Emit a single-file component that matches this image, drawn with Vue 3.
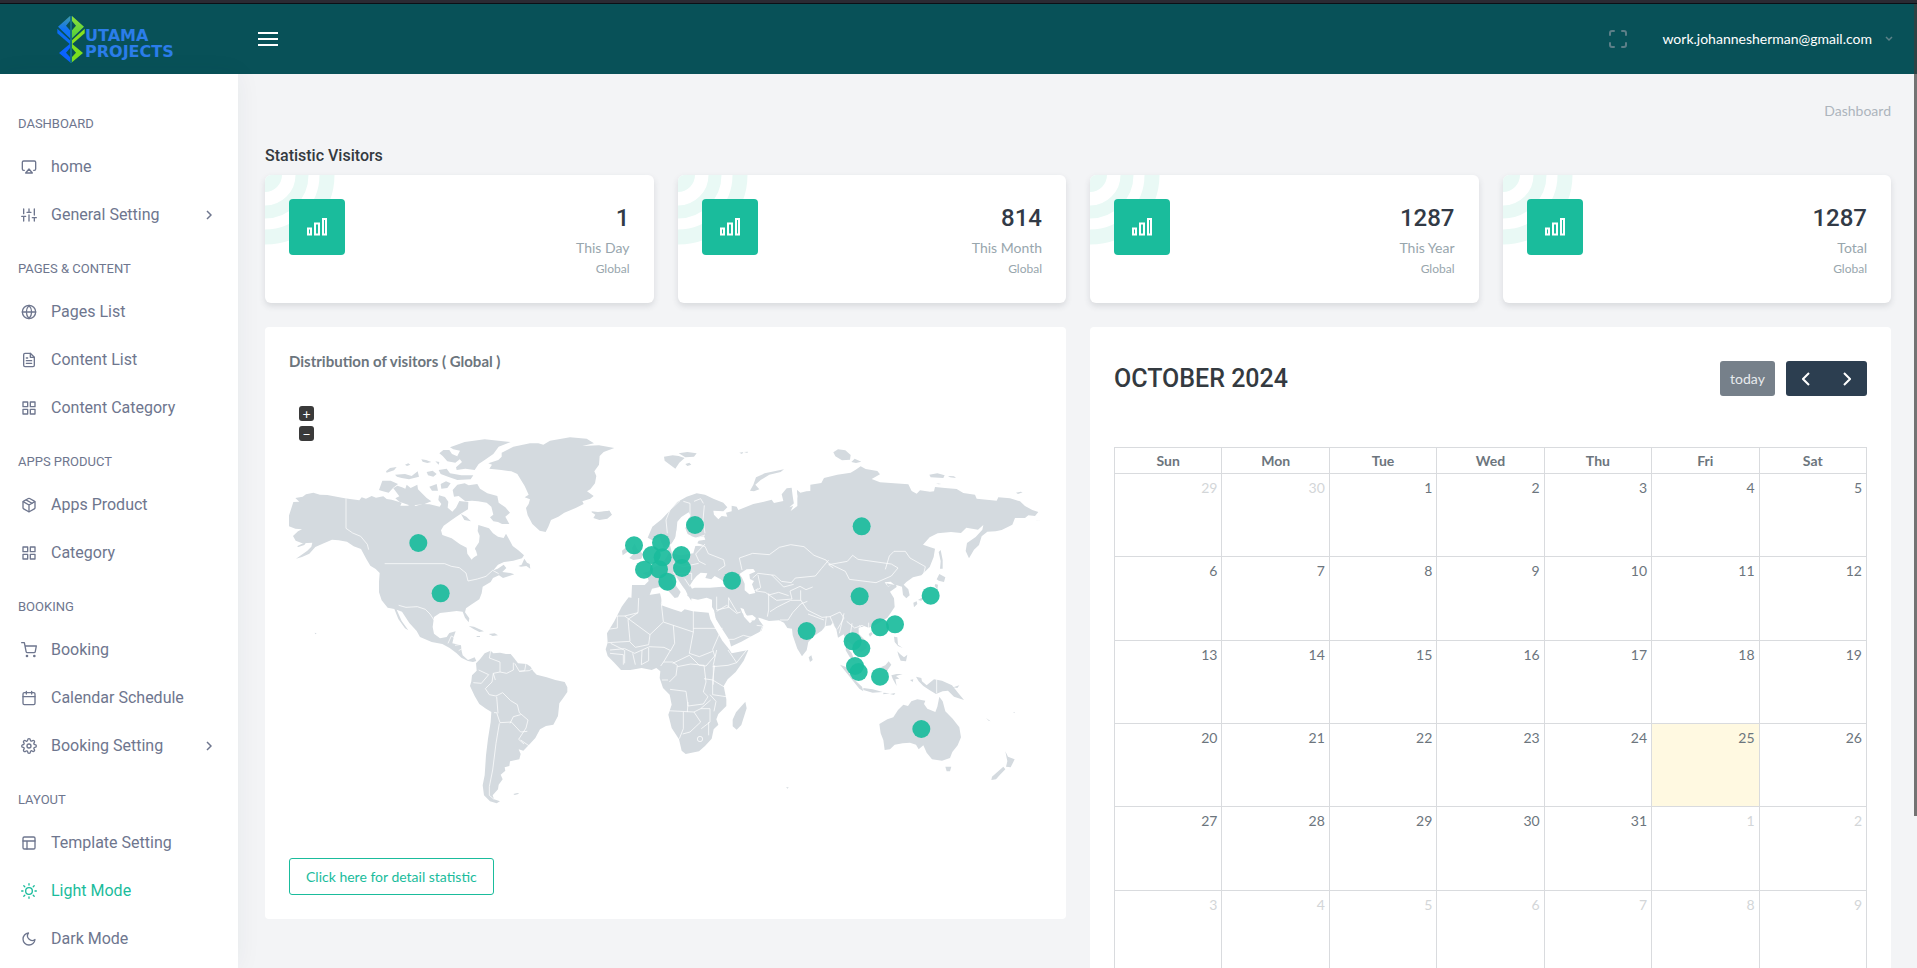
<script setup>
const icons = {
  airplay: '<path d="M5 17H4a2 2 0 0 1-2-2V5a2 2 0 0 1 2-2h16a2 2 0 0 1 2 2v10a2 2 0 0 1-2 2h-1"/><path d="M12 15l5 6H7z"/>',
  sliders: '<path d="M4 21v-7M4 10V3M12 21v-9M12 8V3M20 21v-5M20 12V3M1 14h6M9 8h6M17 16h6"/>',
  globe: '<circle cx="12" cy="12" r="10"/><path d="M2 12h20M12 2a15.3 15.3 0 0 1 4 10 15.3 15.3 0 0 1-4 10 15.3 15.3 0 0 1-4-10 15.3 15.3 0 0 1 4-10z"/>',
  file: '<path d="M14 2H6a2 2 0 0 0-2 2v16a2 2 0 0 0 2 2h12a2 2 0 0 0 2-2V8z"/><path d="M14 2v6h6M16 13H8M16 17H8M10 9H8"/>',
  grid: '<path d="M3 3h7v7H3zM14 3h7v7h-7zM14 14h7v7h-7zM3 14h7v7H3z"/>',
  box: '<path d="M16.5 9.4l-9-5.19M21 16V8a2 2 0 0 0-1-1.73l-7-4a2 2 0 0 0-2 0l-7 4A2 2 0 0 0 3 8v8a2 2 0 0 0 1 1.73l7 4a2 2 0 0 0 2 0l7-4A2 2 0 0 0 21 16z"/><path d="M3.27 6.96L12 12.01l8.73-5.05M12 22.08V12"/>',
  cart: '<circle cx="9" cy="21" r="1"/><circle cx="20" cy="21" r="1"/><path d="M1 1h4l2.68 13.39a2 2 0 0 0 2 1.61h9.72a2 2 0 0 0 2-1.61L23 6H6"/>',
  calendar: '<rect x="3" y="4" width="18" height="18" rx="2"/><path d="M16 2v4M8 2v4M3 10h18"/>',
  settings: '<circle cx="12" cy="12" r="3"/><path d="M19.4 15a1.65 1.65 0 0 0 .33 1.82l.06.06a2 2 0 0 1 0 2.83 2 2 0 0 1-2.83 0l-.06-.06a1.65 1.65 0 0 0-1.82-.33 1.65 1.65 0 0 0-1 1.51V21a2 2 0 0 1-2 2 2 2 0 0 1-2-2v-.09A1.65 1.65 0 0 0 9 19.4a1.65 1.65 0 0 0-1.82.33l-.06.06a2 2 0 0 1-2.83 0 2 2 0 0 1 0-2.83l.06-.06a1.65 1.65 0 0 0 .33-1.82 1.65 1.65 0 0 0-1.51-1H3a2 2 0 0 1-2-2 2 2 0 0 1 2-2h.09A1.65 1.65 0 0 0 4.6 9a1.65 1.65 0 0 0-.33-1.82l-.06-.06a2 2 0 0 1 0-2.83 2 2 0 0 1 2.83 0l.06.06a1.65 1.65 0 0 0 1.82.33H9a1.65 1.65 0 0 0 1-1.51V3a2 2 0 0 1 2-2 2 2 0 0 1 2 2v.09a1.65 1.65 0 0 0 1 1.51 1.65 1.65 0 0 0 1.82-.33l.06-.06a2 2 0 0 1 2.83 0 2 2 0 0 1 0 2.83l-.06.06a1.65 1.65 0 0 0-.33 1.82V9a1.65 1.65 0 0 0 1.51 1H21a2 2 0 0 1 2 2 2 2 0 0 1-2 2h-.09a1.65 1.65 0 0 0-1.51 1z"/>',
  layout: '<rect x="3" y="3" width="18" height="18" rx="2"/><path d="M3 9h18M9 21V9"/>',
  sun: '<circle cx="12" cy="12" r="5"/><path d="M12 1v2M12 21v2M4.22 4.22l1.42 1.42M18.36 18.36l1.42 1.42M1 12h2M21 12h2M4.22 19.78l1.42-1.42M18.36 5.64l1.42-1.42"/>',
  moon: '<path d="M21 12.79A9 9 0 1 1 11.21 3 7 7 0 0 0 21 12.79z"/>',
}

const groups = [
  { title: 'DASHBOARD', items: [
    { label: 'home', icon: 'airplay' },
    { label: 'General Setting', icon: 'sliders', more: true },
  ] },
  { title: 'PAGES & CONTENT', items: [
    { label: 'Pages List', icon: 'globe' },
    { label: 'Content List', icon: 'file' },
    { label: 'Content Category', icon: 'grid' },
  ] },
  { title: 'APPS PRODUCT', items: [
    { label: 'Apps Product', icon: 'box' },
    { label: 'Category', icon: 'grid' },
  ] },
  { title: 'BOOKING', items: [
    { label: 'Booking', icon: 'cart' },
    { label: 'Calendar Schedule', icon: 'calendar' },
    { label: 'Booking Setting', icon: 'settings', more: true },
  ] },
  { title: 'LAYOUT', items: [
    { label: 'Template Setting', icon: 'layout' },
    { label: 'Light Mode', icon: 'sun', active: true },
    { label: 'Dark Mode', icon: 'moon' },
  ] },
]

const stats = [
  { value: '1', label: 'This Day' },
  { value: '814', label: 'This Month' },
  { value: '1287', label: 'This Year' },
  { value: '1287', label: 'Total' },
]

const dots = [
  [1255, 1629], [1322, 1780], [1902, 1636], [1983, 1628], [1955, 1665], [1988, 1672],
  [1932, 1709], [1977, 1708], [2002, 1745], [2044, 1665], [2046, 1704], [2085, 1575],
  [2196, 1742], [2420, 1893], [2585, 1579], [2579, 1789], [2792, 1787], [2640, 1882],
  [2685, 1873], [2558, 1924], [2584, 1945], [2565, 1998], [2576, 2016], [2640, 2030], [2764, 2187],
]

const weekdays = ['Sun', 'Mon', 'Tue', 'Wed', 'Thu', 'Fri', 'Sat']
const first = new Date(2024, 8, 29)
const weeks = Array.from({ length: 6 }, (_, w) =>
  Array.from({ length: 7 }, (_, d) => {
    const date = new Date(first.getFullYear(), first.getMonth(), first.getDate() + w * 7 + d)
    return { n: date.getDate(), other: date.getMonth() !== 9, today: date.getMonth() === 9 && date.getDate() === 25 }
  }),
)
</script>

<template>
  <div class="app">
    <div class="window-edge"></div>
    <header class="topbar">
      <a href="#" class="brand" aria-label="Utama Projects">
        <svg width="28" height="48" viewBox="15 22 84 144" aria-hidden="true">
          <defs>
            <linearGradient id="wing" x1="0" y1="0" x2="0" y2="1">
              <stop offset="0" stop-color="#3f9aa8" />
              <stop offset="0.6" stop-color="#1173f5" />
            </linearGradient>
            <linearGradient id="leaf" x1="0" y1="0" x2="0" y2="1">
              <stop offset="0" stop-color="#8fe03a" />
              <stop offset="1" stop-color="#4fcf3a" />
            </linearGradient>
          </defs>
          <path fill="url(#wing)" d="M54 25 18 57l36 35V68L42 54l12-14z" />
          <path fill="#0b6cf5" d="M16 63l38 35v12L16 77z" />
          <path fill="url(#leaf)" d="M60 25l36 32-36 35V68l12-14-12-14z" />
          <path fill="#86e01e" d="M98 63 60 98v12l38-33z" />
          <path fill="#0b63ff" d="M54 108 21 136l33 28v-16l-12-13 12-14z" />
          <path fill="#7be01f" d="M60 108l33 28-33 28v-16l12-13-12-14z" />
          <path stroke="#1f8fb0" stroke-width="3" d="M57 25V166" />
        </svg>
        <span class="brand-name">UTAMA<br />PROJECTS</span>
      </a>
      <button class="burger" aria-label="Toggle menu"><i></i><i></i><i></i></button>
      <div class="top-right">
        <button class="full" aria-label="Fullscreen">
          <svg width="20" height="20" viewBox="0 0 20 20" fill="none" stroke="#5d7f88" stroke-width="2" stroke-linecap="round">
            <path d="M2 6V4q0-2 2-2h2M14 2h2q2 0 2 2v2M18 14v2q0 2-2 2h-2M6 18H4q-2 0-2-2v-2" />
          </svg>
        </button>
        <button class="account">
          work.johannesherman@gmail.com
          <svg width="8" height="6" viewBox="0 0 8 6" fill="none" stroke="#5d8289" stroke-width="1.500"><path d="M1 1l3 3 3-3" /></svg>
        </button>
      </div>
    </header>

    <div class="body">
      <nav class="side">
        <section v-for="g in groups" :key="g.title">
          <h2>{{ g.title }}</h2>
          <a v-for="it in g.items" :key="it.label" href="#" class="item" :class="{ active: it.active }">
            <svg width="16" height="16" viewBox="0 0 24 24" fill="none" stroke="currentColor" stroke-width="2" stroke-linecap="round" stroke-linejoin="round" v-html="icons[it.icon]"></svg>
            <span>{{ it.label }}</span>
            <svg v-if="it.more" class="more" width="6" height="10" viewBox="0 0 6 10" fill="none" stroke="currentColor" stroke-width="1.500"><path d="M1 1l4 4-4 4" /></svg>
          </a>
        </section>
      </nav>

      <main>
        <div class="crumb">Dashboard</div>
        <h3 class="section-title">Statistic Visitors</h3>

        <div class="stats">
          <article v-for="s in stats" :key="s.label" class="stat">
            <svg class="rings" width="70" height="70" viewBox="0 0 70 70" fill="none" stroke="#e9f9f5" aria-hidden="true">
              <circle r="17" fill="#e9f9f5" stroke="none" />
              <circle r="37" stroke-width="13" />
              <circle r="62" stroke-width="15" />
            </svg>
            <div class="badge">
              <svg width="22" height="20" viewBox="0 0 22 20" fill="none" stroke="#fff" stroke-width="2">
                <path d="M2 11.500h3v6H2zM9 6.500h4v11H9zM17 2h3v15.500h-3z" />
              </svg>
            </div>
            <div class="figures">
              <strong>{{ s.value }}</strong>
              <span>{{ s.label }}</span>
              <small>Global</small>
            </div>
          </article>
        </div>

        <div class="panels">
          <section class="panel">
            <h4>Distribution of visitors ( Global )</h4>
            <div class="map">
              <div class="zoom">
                <button aria-label="Zoom in">+</button>
                <button aria-label="Zoom out">−</button>
              </div>
              <svg viewBox="867 1170 2259 1332" role="img" aria-label="World map of visitors">
                <!-- Americas -->
                <g transform="translate(840 1140)">
                  <g fill="#d4dadf">
                    <path d="M40 366l18-1-12-11 22-4 10-7 22-5 20 6 22 1 48 9 20 3 28 4 7-9 13 4 17-8 13 5 22-4 10 8 15 2 30 9-4 9h22l15-6 9 7 20-6 22 1 30 7 5-8-9-12 2-14 18 5 10 14-2 18 14 12 11-12 10-20 27 3-1 22-17 10-18 12-14 10-24 17-8 14 4 14 28 10 25 18 20 10 2 18 13 18 13-16-3-18 12-18 2-20-6-14 2-18 32 10 12 15 15 10 17 4 7-13 12 22 8 15 17 13 17 15-6 9-26 7-28 4-18 8-14 17 13-5 18-12 8 10-12 12 24 3 12 4-18 6-16 5-12-8-18 8-7 12-24 14-3 20-7 18-26 17-14 10-3 12 13 18-2 12-11-14-7-18-18-2-30 4-20 2-18 12-4 30 4 20 18 14 20-4 8-12 19-5-5 14-5 22 26 6 2 18 3 12 16 14 20-8 5 11-10 3-15-3-20-10-15-14-20-15-22-12-32-6-35-15-10-18-22-24-22-34-16-6 15 34 20 28-10-6-20-28-12-30-20-4-18-22-8-24v-32l2-26-12-12-16-10-12-20-16-30-22-8-20-14-25-4-20-2-28 12-22 10-18 20-22 10-18 5 34-24 12-12 3-12-30 2-20-8-8-14 15-14 12-6-20-2-22-8-5-6z" />
                    <path d="M297 330l10-28 25 0 22 10-15 12-13 14-20-5zM318 274l12-10 20-3-8 10-22 7zM345 284l30-2 20 6 18-14 4 16-30 8-22-4-14-4zM340 325l12-8 14 5 10 4 4-12 12 10 20-10 2 14 14 14 12 12 14 10-20 8-26 3-22 0-28-10-12-10 12-6zM424 238l14 2 16 6-12 3-14-4zM375 254l10-4 6 4-10 4zM440 276l18-4 12 10-10 8-16-4zM448 320l22-8 4 20-18 0zM482 312l16-8 14 6-10 14-18 2zM478 220l12-10 18 0 8 12 28 12-18 14-24-4-14-16zM476 270l24-4 10 14 34 6 36 0-8 12-40 2-28-10-22-8zM466 244l12 2-2 8zM510 202l44-16 60-8 78 8-36 14-16 22-26 18-18 12-12 18-28-4-26 4-2-8 18-16-14-18 8-16-20-4zM518 330l14-16 22-4 12 6 26-4 8 14 22 14 30 8 4 20 20 14 14 16-14 12 12 22-22 0-12-6-14-2-10-12 10-8-6-24-14-12-26-4-18-2-20 2-20-16-14 2zM543 402l16 8 14 14-20-4zM715 558l10-4 8-18 8 12 8 4 2 14-12-8-16 2z" />
                    <path d="M625 250l30-10 10-10 0-12 35-18 50-10 25 0 15 4 20-12 60-10 50 4 22 14-35 8 50-2 46 8-32 12-12 12-2 26-14 20 6 14-4 22-14 18-10 6 20 14-10 8-24 8 4 8-24 12-34 14-18 12-22 10-8 20-8 16-18-4-22-20-14-26-5-22 8-12 4-14-16-6 12-8-12-26-22-36-18-8-30-4-36-4 8-12zM934 394l20 2 34-4 6 12-16 10-20 2-14-6 10-8-16-4zM566 738l16 2 30 14-14 2-16-8zM626 762l18-2 10 6-16 2zM590 768h10v3h-10zM104 758l6 2-4 3zM51 499l20-10 12-8-10 14-18 6z" />
                    <path d="M600 838l14-18 18-8 8 8 20-2 18 4 14 0 10 12 12 16 26 2 12 8 8 14 10 10 30 8 26 8 28 6 8 16 0 14-14 20-10 14-4 38-14 26-22 4-18 10-14 26-20 22-16 16-14-4 6 14-4 16-28 6-2 14-14 4 2 10-14 12 6 14-12 16-2 14-16 18 4 12 18 6-10 6-20-6-18-18-4-30 6-30 4-60 6-50 8-50 2-30-16-10-20-14-14-24-14-30 4-14 2-18 14-14-2-22zM700 1242l12-3 6 2-14 4z" />
                  </g>
                  <path fill="#fff" d="M560 480l12 18-4 16 2 14 8 6 14-8-4-14z" />
                  <g fill="none" stroke="#fff" stroke-width="2.200">
                    <path d="M198 355v90l20 14 24 10 20 24 4 16M314 551h180l20 8 24 4 20 16 6 24 28-6 26-8 20-18 18 10M356 676l22 6 34-2 24 8 14 14 16 24M504 790l10-22 14 8M525 796l26-4M536 812l14-8" />
                    <path d="M632 812l-4 22 32 12 0 30-20 4-4 26-20 20 12 18 20 4 20-10 24 24 20 12 6 24 26 22-6 24-22 34 16 14M580 908l24 2 22-26-30-14M640 880l6 20M660 876l20 4 20-10 0-22M704 850l14 24 16-2 4-22M718 874l30-2 16-10M690 1030l10-20 22-6M642 998l8 0 10 30 34-2 28 30 20-2M650 950l4 50M658 1030l-10 60-10 80-10 50 0 26 14 12M722 1080l26 18" />
                  </g>
                </g>
                <!-- Europe, Asia, Africa, Oceania -->
                <g transform="translate(1770 1260)">
                  <g fill="#d4dadf">
                    <path d="M187 320l28-22 24-26 23-26 28-16 30-10 25 4 25 12 30 12 12 14-12 12-30-2 2 12 13 14 10-10 17 2-4-12 17-4v-17l15 3 5 10 15-6 30-12 25-5 30-8 7 10 28-6-5-20 15-18 15-2 3 25 4 25-10 20 20-15 0-30-3-20 12 10 18-4 12-1 0-19 33-5 8-15 40-10 40-6 15-9 15-10 15 8 35 6 8 10-25 14 25 10 85 6 10 20 15 8 10-10 30 4 12-1 3-13 30 3 35 3 20 12 35 5 5 12 60 6 5-10 35 3 30 9 15 14 22 12 18 6-10 12-20-2-10 8h-30l-8 20-32 16-18 4-25 1-17 14-8 26-15 14-15 26-10-22 4-24 26-18 20-22 3-14-16 14-35-6-16 16-30-3-40 4-24 12-20 22 22 8 14 4-4 25-12 30-25 25-25 6-20 14-8 8 14 14 4 18-10 9-10-10-3-25-17-5-10 10-17-2 15-12-13 9-5-10 25 5-12-10-18 2 12 16 22-10 2 8-20 14 12 20 2 26-12 18-10 14-36 22-20 8-12-4-18 4 0 18 24 24v20l-17 12-14-8-14-16-12-8-2 18 14 16 10 26-16-14-12-20 2-26-8-22-17 10-5-25-12-20-4 8-16 2-12 14-20 14-20 20-5 25-14 18-14-23-14-40-2-20-14-2-10-16-15-7-30 2-30-10-8 2-12-10-18 2-8-20-10-4 6 16 14 14 7 10 16-2 8-14 6 14 12 16-6 16-30 16-30 16-34 16-4-12-22-34-16-34-6-30-6-10 0-22-16-6-26 6-22-4-10-8 0-16 22-8 26 0 20 0 36-3 12 2-2-12-14-12-18-10-10 10-18-4 6-14-20-2-12 10-10 12-10 16 6 10-8 12 6 10 0 14-8-12-10-20-12-16-14-20-10-6-4 10 14 22 12 16-8 16-10 2-18-20-24-14-26 6-5 14-8 20-22 7-17-6-10-2 2-44 38 0 12-12-4-16-16-8 18-4 12-10 20-10 20-18 10-17-4-16 8-8 6 24 26 6 38-6 6-22 26-2-20-6 4-8 20-3-4-10-24 4-24-8-8-20 8-22 10-10-18 6-20 20-8 18-2 18-12 16-22 14-10-22-3-12-22 10-14-8z" />
                    <path d="M222 110l26-4 18 2 18 6-16 14-12 18-14-10-18-14zM266 100l26-4 28 4-8 10-26 2zM286 132l12-4 6 6-12 4zM448 98l12-2-4 6zM462 96l12-1-2 4zM480 212l10-18 8-22 26-12 36-8 22-4-10 8-34 8-26 16-16 14 12 14-16 6zM4 276l18 2 36-6 8 12-14 12-24 4-18-6 6-10zM96 392l10-8 6 12-14 10zM118 414l12-12-4-18 8-14 8 18 18 14-6 14-24 4z" />
                    <path d="M730 97l14-9 22 3 16 14-2 14-24 2-20-12zM784 126l10-10 20 9-16 4zM1018 164l24-4 22 6-4 8-38-2zM1074 168l18 1 6 5-18-2zM1038 190l16 2-8 1zM1278 218l14-3 6 2-14 5zM1338 300l14 2-12-1zM1046 396l6-6 6 30 0 26-8 0 2-22zM1040 478l8-16 18 10-4 14-16-4zM1036 492l8 2-2 14-8-10zM970 548l10-4 2 8-10 10zM984 540l14-8 10-4-14 14zM836 642l8-6 4 6-8 8zM656 712l8-6 4 14-8 6zM912 650l10 2 2 22 14 10-14-6-10-12zM922 694l8 8 12 10 10-8-4 20-16-2-6-14zM750 734l20 8 14 28 32 30 4 14-12-8zM872 742l14-6 10-12 8 10-14 20zM820 804l28 4 30 8-30 2-28-8zM880 818l20 2-20 3zM900 822l16-3-4 6zM904 766l16-4 18 0-20 6 10 8-12 2 4 20-8-14-4-8zM960 780l10-2-2 8zM978 770l16 4 2 10 14 12 22-18 24 4 30 14 18 22 18 22-30-10-18-18-16 2-20 8-20-12-18-12-14-14zM1090 802l18-6-6 8z" />
                    <path d="M868 912l24-14 18-6 14-22 16-16 14 4 10-14 18-6 24 4-4 10 10 14 24 10 6-16 6-30 10 14 8 30 22 22 20 26 5 30-10 24-16 20-7 18-24 8-30-4-16-20-10-22-14 12-8-14-18-6-22 2-24 4-14 14-16 2-4-30-8-20zM1066 1040l18 0-4 14-10 0zM1246 994l8 16 20 8-12 24-14-2 4-16zM1206 1070l34-30 6 8-16 16-12 14-14 2zM1188 894l14 10-6-2zM1270 876l6 1-4 2zM588 1102l8 0-3 4z" />
                    <path d="M95 560l13-18 8-10 22 4 34-10 38-6 6 24-2 12 30 10 30 10 10-8 24 6 48 4 5 20 14 26 22 38 22 28 6 10 50-10-14 32-24 34-24 22-12 20 8 40 0 20-24 24-6 16 6 16-14 14-6 28-20 22-18 16-40 8-12-10-8-34-22-34-10-40 10-30-6-30-20-20-10-30 2-20-12-10-14 6-30-6-34 6-28 0-20-22-20-20-6-20 6-20-2-28 22-36zM466 845l4 20-16 50-14 14-12-10 0-20 10-22z" />
                  </g>
                  <g fill="#fff">
                    <path d="M448 462l22-14 20-1 6 8-18 8 2 14 12 6-6 10 10 26-18 4-14-12 0-20-8-18zM262 305l12-14 22-14 6 10-14 18-10 10 2 20 26 14-18 4-22 14-12 10-6-10 10-18zM456 568l16 20 14 16-6 6-18-20z" />
                    <path d="M358 574l8 4 26 42 26 40 8 30-10-8-24-36-22-44zM598 262l14-12 0-50 8-4 2 34-6 26z" />
                  </g>
                  <g fill="none" stroke="#fff" stroke-width="2.200">
                    <path d="M300 285l0-35-20-6M232 340l-4-40 12-30 30-28M340 250l-8-14-20 8M345 340l-6-40 4-44M345 345l-30 10 0 20 30 4 10 22 46 18 4 18-20 14M285 380l30-6M300 350l10 30M345 372l-28 30 10 22 20 10M250 430l30 10 46-10M255 460l50 0 0 20M300 500l-16-24M110 480l0 36M276 500l-26-44" />
                    <path d="M456 450l-8-36 40-14 50 4 30-22 34-8 40 6 30 26 36 14 8 10 50 24 12 24 80 10 46-20 20-24-20-12-100-14-16-12-16 18-56 10 14 10M886 448l12-40 14-14 34 0 14 20 46 26-6 26-24 14M716 420l-22 26-18 22-60 6-12 14-30-4-20-18-50-6-16 14M504 465l8 38-14 10 28 4 34 24 46-4-6-24 30-14 18 10 20-8M545 465l36 36 30-8M505 505l-16 10M536 520l0 50-4 20M540 575l22-14 40-20 30 0 0-30M536 525l30-8 30 10M632 540l20 30 44 22 24-2 30-14 12 18-20 34M654 582l48 18M709 590l-4 34M720 590l12 26M762 580l-14 60M770 604l24 20 22-8 20 12 0-20M786 610l-6 40M808 616l20 24 8 20M570 600l24 0 14-22 24-26 20-8" />
                    <path d="M380 530l0 40 36-8 0-30M380 574l30-18 30 24 12-4M362 572l12 10M416 534l26 44M416 658l16 0 28-12 24 6 24-10 10-24-18-2" />
                    <path d="M310 558v78l-90-30M310 625h88M220 605l-6-54 4-28M220 606l-40 38-76-56 40-10 2-44M104 588l-34 0-18 40 30-4 0-36M144 578l-30 20 6 66-66 4M180 644l-4 30-40 8-16-16M250 616l4 54-12 22-20-10-46-2M310 636l-12 64 30 10 40-16M248 730l50-24 30 30 20 2 26-30-6-20 26-60M176 682l0 40-22 12M128 700l8 34M104 690l0 40M156 690l-2 44M60 690l44-4 30 14 40-18M60 700l40 4 0 30M62 670l40 20M242 690l-20 34-10 14M220 726l28 0 14 10-4 30-20 20M234 780l-18 0M262 740l40-8 40 4 6 50-8 30 14 14-14 22-46 6-6-44-48-6M368 740l46-4 26-8 30-38M380 690l-10 44 0 60M414 690l26 38M374 736l-6 44 40 24M342 776l26 4 0 44 40 6M232 872l80 4 20-10 30-26M280 876l0 50-12 30M294 846l-2 30M312 876l20 30-32 30-22 6M332 866l28 0 0 40-26 20M360 824l18 20-6 30M356 906l0 40M1040 778v42" />
                    <circle cx="330" cy="957" r="8" />
                  </g>
                </g>
                <g fill="#1abc9c" fill-opacity="0.920">
                  <circle v-for="(d, i) in dots" :key="i" :cx="d[0]" :cy="d[1]" r="27" />
                </g>
              </svg>
            </div>
            <a href="#" class="detail">Click here for detail statistic</a>
          </section>

          <section class="panel cal">
            <div class="cal-head">
              <h2>OCTOBER 2024</h2>
              <div class="cal-tools">
                <button class="today-btn" disabled>today</button>
                <div class="pager">
                  <button aria-label="Previous month"><svg width="8" height="14" viewBox="0 0 8 14" fill="none" stroke="#fff" stroke-width="2"><path d="M7 1L1 7l6 6" /></svg></button>
                  <button aria-label="Next month"><svg width="8" height="14" viewBox="0 0 8 14" fill="none" stroke="#fff" stroke-width="2"><path d="M1 1l6 6-6 6" /></svg></button>
                </div>
              </div>
            </div>
            <table>
              <thead>
                <tr><th v-for="d in weekdays" :key="d" scope="col">{{ d }}</th></tr>
              </thead>
              <tbody>
                <tr v-for="(w, i) in weeks" :key="i">
                  <td v-for="(d, j) in w" :key="j" :class="{ other: d.other, today: d.today }">{{ d.n }}</td>
                </tr>
              </tbody>
            </table>
          </section>
        </div>
      </main>
    </div>
    <div class="scroll-thumb"></div>
  </div>
</template>

<style>
body {
  background: #f3f4f6;
  overflow: hidden;
}
</style>

<style scoped>
.app {
  --ui: Lato, "Noto Sans", sans-serif;
  --head: Roboto, "Liberation Sans", sans-serif;
  display: flex;
  flex-direction: column;
  height: 100vh;
  overflow: hidden;
  font: 14px/22px var(--ui);
  color: #6c757d;
  background: #f3f4f6;
}
.app * {
  box-sizing: border-box;
}
button {
  border: 0;
  padding: 0;
  background: none;
  font: inherit;
  color: inherit;
}
a {
  text-decoration: none;
}
h2, h3, h4 {
  margin: 0;
}
.window-edge {
  flex: none;
  height: 4px;
  background: #2b2a33;
  border-bottom: 1px solid #0c0f16;
}
.topbar {
  flex: none;
  display: flex;
  align-items: center;
  height: 70px;
  padding-right: 24px;
  background: #085158;
}
.brand {
  display: flex;
  align-items: center;
  width: 240px;
  padding-left: 57px;
  color: #2b7de9;
}
.brand-name {
  padding-top: 10px;
  font: bold 16px/16px "DejaVu Sans", sans-serif;
}
.burger {
  display: flex;
  flex-direction: column;
  gap: 4px;
  margin-left: 18px;
}
.burger i {
  width: 20px;
  height: 2px;
  background: #fff;
}
.top-right {
  display: flex;
  align-items: center;
  gap: 34px;
  margin-left: auto;
}
.full, .full svg {
  display: block;
}
.account {
  display: flex;
  align-items: center;
  gap: 13px;
  color: #fff;
}
.body {
  flex: 1;
  display: flex;
  min-height: 0;
}
.side {
  flex: none;
  width: 238px;
  padding-top: 20px;
  background: #fff;
  box-shadow: 0 0 24px rgba(40, 50, 65, 0.06);
  color: #6e768e;
  font-family: var(--head);
}
.side h2 {
  padding: 21px 18px 10px;
  font-size: 13px;
  line-height: 18px;
  font-weight: 400;
}
.item {
  display: flex;
  align-items: center;
  height: 48px;
  padding: 0 26px 0 21px;
  gap: 14px;
  font-size: 16px;
  color: inherit;
}
.item.active {
  color: #1abc9c;
}
.more {
  margin-left: auto;
}
main {
  flex: 1;
  min-width: 0;
  padding: 0 26px 0 27px;
}
.crumb {
  height: 74px;
  line-height: 74px;
  text-align: right;
  color: #adb5bd;
}
.section-title {
  height: 27px;
  font: 500 16px/16px var(--head);
  color: #343a40;
}
.stats {
  display: grid;
  grid-template-columns: repeat(4, 1fr);
  gap: 24px;
}
.stat {
  position: relative;
  display: flex;
  justify-content: space-between;
  height: 128px;
  padding: 24px;
  border-radius: 6px;
  background: #fff;
  box-shadow: 0 3px 6px rgba(50, 58, 70, 0.14);
  overflow: hidden;
}
.rings {
  position: absolute;
  left: 0;
  top: 0;
}
.badge {
  position: relative;
  display: grid;
  place-items: center;
  width: 56px;
  height: 56px;
  border-radius: 4px;
  background: #1abc9c;
}
.figures {
  display: flex;
  flex-direction: column;
  text-align: right;
  color: #98a6ad;
}
.figures strong {
  font: 500 24px/38px var(--head);
  color: #323a46;
}
.figures span {
  line-height: 22px;
}
.figures small {
  font-size: 12px;
  line-height: 20px;
}
.panels {
  display: grid;
  grid-template-columns: 1fr 1fr;
  align-items: start;
  gap: 24px;
  margin-top: 24px;
}
.panel {
  padding: 24px;
  border-radius: 4px;
  background: #fff;
}
.panel h4 {
  font: bold 15px/20px var(--ui);
}
.map {
  position: relative;
  margin: 19px 0 24px;
}
.map svg {
  display: block;
  width: 100%;
}
.zoom {
  position: absolute;
  left: 10px;
  top: 16px;
  display: grid;
  gap: 5px;
}
.zoom button {
  width: 15px;
  height: 15px;
  border-radius: 3px;
  background: #3a3a3a;
  color: #fff;
  font: 14px/14px var(--ui);
}
.detail {
  display: inline-block;
  padding: 7px 16px;
  border: 1px solid #1abc9c;
  border-radius: 3px;
  line-height: 21px;
  vertical-align: top;
  color: #1abc9c;
}
.cal {
  padding-top: 34px;
}
.cal-head {
  display: flex;
  align-items: center;
  justify-content: space-between;
  margin-bottom: 51px;
}
.cal-head h2 {
  font: 500 25px/35px var(--head);
  color: #343a40;
}
.cal-tools {
  display: flex;
  gap: 11px;
}
.today-btn {
  width: 55px;
  height: 35px;
  border-radius: 3px;
  background: #76808a;
  color: #e8ebee;
}
.pager {
  display: grid;
  grid-template-columns: 1fr 1fr;
  width: 81px;
  border-radius: 3px;
  background: #2c3e50;
}
.pager button {
  display: grid;
  place-items: center;
}
table {
  width: 100%;
  height: 527px;
  table-layout: fixed;
  border-collapse: collapse;
}
th, td {
  border: 1px solid #d9dbde;
}
th {
  height: 26px;
  padding: 0;
  line-height: 20px;
}
td {
  padding: 3px 4px 0 0;
  text-align: right;
  vertical-align: top;
}
td.other {
  color: #d3d6d8;
}
td.today {
  background: #fff9e1;
}
.scroll-thumb {
  position: absolute;
  top: 4px;
  right: 0;
  width: 3px;
  height: 812px;
  background: rgba(60, 60, 60, 0.7);
}
</style>
